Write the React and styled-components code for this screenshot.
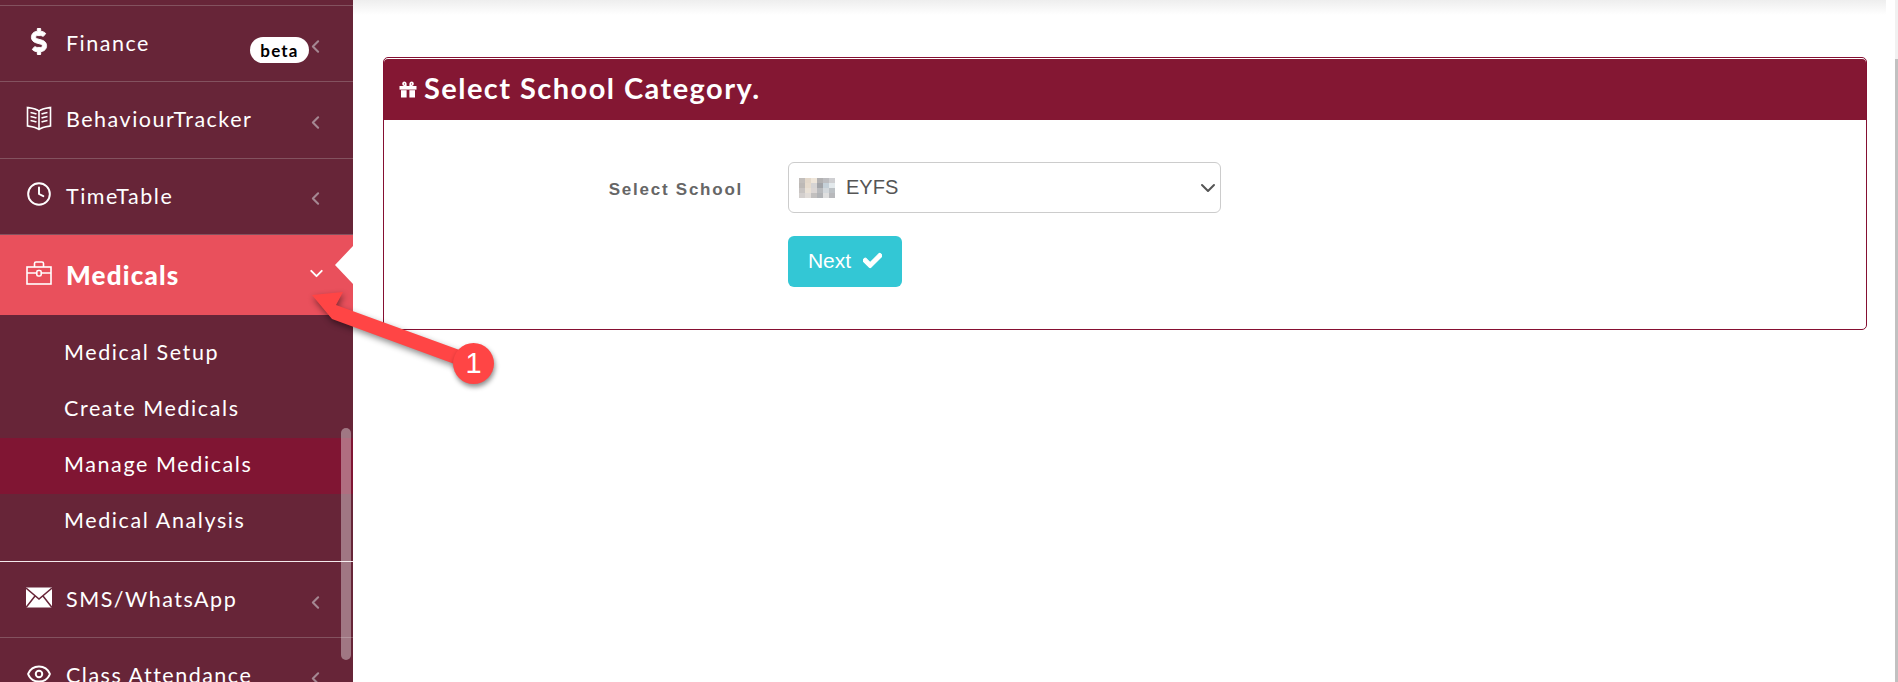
import React from 'react'
import styled, { createGlobalStyle } from 'styled-components'
import { ChevronDown, ChevronLeft, Clock, Eye } from 'lucide-react'
import { FaCheck, FaDollarSign } from 'react-icons/fa'

const SIDE_FONT = '"Lato", "Open Sans", sans-serif'

const DollarIcon = styled(FaDollarSign)`
	stroke: currentColor;
	stroke-width: 18px;
`

const CheckIcon = styled(FaCheck)`
	stroke: currentColor;
	stroke-width: 30px;
`

const BookIcon = () => (
	<svg width="26" height="26" viewBox="0 0 26 26" fill="none" stroke="currentColor" strokeWidth="1.6">
		<path d="M13 6 C10 3.5 5 3 1.5 2.5 V21 C5 21.5 10 22 13 24.5 C16 22 21 21.5 24.5 21 V2.5 C21 3 16 3.5 13 6 Z" />
		<path d="M13 6 V24" />
		<path d="M4.5 7.5 C6.5 7.8 8.5 8.2 10.5 9 M4.5 11.5 C6.5 11.8 8.5 12.2 10.5 13 M4.5 15.5 C6.5 15.8 8.5 16.2 10.5 17" />
		<path d="M21.5 7.5 C19.5 7.8 17.5 8.2 15.5 9 M21.5 11.5 C19.5 11.8 17.5 12.2 15.5 13 M21.5 15.5 C19.5 15.8 17.5 16.2 15.5 17" />
	</svg>
)

const CaseIcon = () => (
	<svg width="26" height="24" viewBox="0 0 26 24" fill="none" stroke="currentColor" strokeWidth="1.6">
		<rect x="1" y="6" width="24" height="17" />
		<path d="M8.5 6 V2.5 Q8.5 1 10 1 H16 Q17.5 1 17.5 2.5 V6" />
		<path d="M1 12 H10.5 M15.5 12 H25" />
		<rect x="10.8" y="9.5" width="4.4" height="5.5" rx="1.5" />
	</svg>
)

const MailIcon = () => (
	<svg width="26" height="21" viewBox="0 0 26 21">
		<rect x="0" y="0.5" width="26" height="20" fill="currentColor" />
		<path d="M0 1 L13 12 L26 1 M0 20.5 L9.2 8.8 M26 20.5 L16.8 8.8" fill="none" stroke="#672538" strokeWidth="1.5" />
	</svg>
)

const GiftIcon = () => (
	<svg width="18" height="17" viewBox="0 0 18 17" fill="currentColor">
		<path fillRule="evenodd" d="M5 0.5 A2.6 2.6 0 0 1 7.6 3.1 V5 H5 A2.3 2.3 0 0 1 5 0.5 Z M5.2 2.2 A0.9 0.9 0 0 0 5.2 3.5 H6 V3 A0.9 0.9 0 0 0 5.2 2.2 Z" />
		<path fillRule="evenodd" d="M13 0.5 A2.6 2.6 0 0 0 10.4 3.1 V5 H13 A2.3 2.3 0 0 0 13 0.5 Z M12.8 2.2 A0.9 0.9 0 0 1 12.8 3.5 H12 V3 A0.9 0.9 0 0 1 12.8 2.2 Z" />
		<rect x="0.5" y="5" width="17" height="3.6" />
		<rect x="2" y="9.2" width="5.6" height="7.3" />
		<rect x="10.4" y="9.2" width="5.6" height="7.3" />
	</svg>
)

const mosaicColors = [
	'#c2bebb', '#e3d8ca', '#efe6da', '#b2b1b2', '#bdbdc0', '#cfcfd2',
	'#bdb9b6', '#e6dbcd', '#d6d4d4', '#a2a4a8', '#c5d0d8', '#e3e9ec',
	'#c8c4c2', '#e9e1d6', '#dbd6d4', '#b8babd', '#d3d8dc', '#bcc1c5',
	'#d3cfcd', '#e1dcd8', '#c2c0bf', '#b1b3b6', '#dfdfdf', '#b8b9bc',
]

const menu = [
	{ label: 'Finance', icon: <DollarIcon size={27} />, beta: true },
	{ label: 'BehaviourTracker', icon: <BookIcon /> },
	{ label: 'TimeTable', icon: <Clock size={26} strokeWidth={1.8} /> },
]

const subMenu = ['Medical Setup', 'Create Medicals', 'Manage Medicals', 'Medical Analysis']

const App = () => (
	<Page>
		<GlobalStyle />
		<Sidebar>
			<TopSliver />
			{menu.map((item) => (
				<MenuRow key={item.label}>
					<MenuIcon>{item.icon}</MenuIcon>
					<MenuLabel>{item.label}</MenuLabel>
					{item.beta && <Beta>beta</Beta>}
					<Chevron><ChevronLeft size={21} strokeWidth={2.4} /></Chevron>
				</MenuRow>
			))}
			<ActiveRow>
				<MenuIcon><CaseIcon /></MenuIcon>
				<ActiveLabel>Medicals</ActiveLabel>
				<ActiveChevron><ChevronDown size={21} strokeWidth={2.2} /></ActiveChevron>
				<Caret />
			</ActiveRow>
			<SubList>
				{subMenu.map((name) => (
					<SubItem key={name} $active={name === 'Manage Medicals'}>{name}</SubItem>
				))}
			</SubList>
			<MenuRow>
				<MenuIcon><MailIcon /></MenuIcon>
				<MenuLabel>SMS/WhatsApp</MenuLabel>
				<Chevron><ChevronLeft size={21} strokeWidth={2.4} /></Chevron>
			</MenuRow>
			<MenuRow>
				<MenuIcon><Eye size={26} strokeWidth={1.8} /></MenuIcon>
				<MenuLabel>Class Attendance</MenuLabel>
				<Chevron><ChevronLeft size={21} strokeWidth={2.4} /></Chevron>
			</MenuRow>
			<SideScroll />
		</Sidebar>
		<Main>
			<TopShadow />
			<Card>
				<CardHeader>
					<GiftIcon />
					<CardTitle>Select School Category.</CardTitle>
				</CardHeader>
				<CardBody>
					<FieldLabel>Select School</FieldLabel>
					<Controls>
						<SelectBox>
							<Mosaic>
								{mosaicColors.map((color, i) => (
									<MosaicCell key={i} $color={color} />
								))}
							</Mosaic>
							<SelectText>EYFS</SelectText>
							<SelectArrow><ChevronDown size={24} strokeWidth={2} /></SelectArrow>
						</SelectBox>
						<NextButton>
							Next
							<CheckIcon size={19} />
						</NextButton>
					</Controls>
				</CardBody>
			</Card>
		</Main>
		<PageScroll />
		<Arrow width="180" height="90" viewBox="0 0 180 90">
			<path d="M2 5 L33 2 L26 15 L155 62 L150 76 L22 29 Z" />
		</Arrow>
		<StepBadge>1</StepBadge>
	</Page>
)

const GlobalStyle = createGlobalStyle`
	html, body {
		margin: 0;
		padding: 0;
		background: #ffffff;
		overflow: hidden;
	}
`

const Page = styled.div`
	position: relative;
	display: flex;
	width: 1898px;
	height: 682px;
	overflow: hidden;
	background: #ffffff;
`

const Sidebar = styled.aside`
	position: relative;
	flex: 0 0 353px;
	height: 682px;
	overflow: hidden;
	background: #672538;
	font-family: ${SIDE_FONT};
	color: #ffffff;
`

const TopSliver = styled.div`
	height: 5px;
	border-bottom: 1px solid #83525f;
`

const MenuRow = styled.div`
	position: relative;
	display: flex;
	align-items: center;
	height: 75.33px;
	padding-left: 26px;
	border-bottom: 1px solid #83525f;
`

const MenuIcon = styled.span`
	display: flex;
	justify-content: center;
	width: 26px;
	margin-right: 14px;
	margin-top: -4px;
`

const MenuLabel = styled.span`
	font-size: 21.5px;
	font-weight: 400;
	letter-spacing: 1.5px;
	margin-top: -1px;
	white-space: nowrap;
`

const Chevron = styled.span`
	position: absolute;
	right: 27px;
	top: 50%;
	display: flex;
	margin-top: -8px;
	color: #a58792;
`

const Beta = styled.span`
	position: absolute;
	left: 250px;
	top: 31px;
	display: flex;
	align-items: center;
	justify-content: center;
	width: 59px;
	height: 26px;
	border-radius: 13px;
	background: #ffffff;
	color: #000000;
	font-size: 17px;
	font-weight: 700;
	letter-spacing: 1.2px;
`

const ActiveRow = styled.div`
	position: relative;
	display: flex;
	align-items: center;
	height: 80px;
	padding-left: 26px;
	background: #e9505c;
`

const ActiveLabel = styled.span`
	font-size: 26px;
	font-weight: 900;
	letter-spacing: 1.2px;
`

const ActiveChevron = styled.span`
	position: absolute;
	left: 306px;
	top: 28px;
	display: flex;
`

const Caret = styled.span`
	position: absolute;
	right: 0;
	top: 11px;
	width: 0;
	height: 0;
	border-top: 19px solid transparent;
	border-bottom: 19px solid transparent;
	border-right: 18px solid #ffffff;
`

const SubList = styled.ul`
	margin: 0;
	padding: 11px 0;
	list-style: none;
	border-bottom: 1px solid #f4e9ec;
`

const SubItem = styled.li`
	height: 56px;
	line-height: 53px;
	padding-left: 64px;
	font-size: 21.5px;
	letter-spacing: 1.6px;
	background: ${(props) => (props.$active ? '#801533' : 'transparent')};
`

const SideScroll = styled.div`
	position: absolute;
	left: 341px;
	top: 428px;
	width: 10px;
	height: 232px;
	border-radius: 5px;
	background: rgba(255, 255, 255, 0.38);
`

const Main = styled.main`
	position: relative;
	flex: 1;
	padding: 57px 31px 0 30px;
	font-family: "Liberation Sans", Arial, sans-serif;
`

const TopShadow = styled.div`
	position: absolute;
	left: 0;
	right: 12px;
	top: 0;
	height: 15px;
	background: linear-gradient(#eeeeee, #ffffff);
`

const Card = styled.section`
	position: relative;
	height: 273px;
	box-sizing: border-box;
	border: 1px solid #850f32;
	border-radius: 5px;
	padding-top: 1px;
`

const CardHeader = styled.header`
	display: flex;
	align-items: center;
	gap: 7px;
	height: 61px;
	padding-left: 15px;
	background: #841733;
	color: #ffffff;
	border-radius: 4px 4px 0 0;
`

const CardTitle = styled.h2`
	margin: -5px 0 0;
	font-family: "Lato", sans-serif;
	font-size: 29px;
	font-weight: 700;
	letter-spacing: 1.45px;
`

const CardBody = styled.div`
	display: flex;
	padding-top: 42px;
`

const FieldLabel = styled.label`
	width: 359px;
	padding-top: 18px;
	text-align: right;
	font-size: 17px;
	font-weight: 700;
	letter-spacing: 1.75px;
	color: #666666;
`

const Controls = styled.div`
	display: flex;
	flex-direction: column;
	align-items: flex-start;
	gap: 23px;
	margin-left: 45px;
`

const SelectBox = styled.div`
	display: flex;
	align-items: center;
	box-sizing: border-box;
	width: 433px;
	height: 51px;
	padding: 0 0 0 10px;
	border: 1px solid #cccccc;
	border-radius: 6px;
	color: #555555;
	font-size: 20px;
`

const Mosaic = styled.span`
	display: grid;
	grid-template-columns: repeat(6, 6px);
	grid-auto-rows: 5px;
	margin-right: 11px;
`

const MosaicCell = styled.span`
	background: ${(props) => props.$color};
`

const SelectText = styled.span`
	flex: 1;
`

const SelectArrow = styled.span`
	display: flex;
	color: #555555;
`

const NextButton = styled.button`
	display: flex;
	align-items: center;
	justify-content: center;
	gap: 12px;
	width: 114px;
	height: 51px;
	padding: 0 0 2px;
	border: 0;
	border-radius: 6px;
	background: #33c7d5;
	color: #ffffff;
	font-family: inherit;
	font-size: 21px;
`

const PageScroll = styled.div`
	position: absolute;
	right: 0;
	top: 0;
	width: 3px;
	height: 682px;
	background: linear-gradient(#f1f1f1 59px, #c1c1c1 59px);
`

const Arrow = styled.svg`
	position: absolute;
	left: 310px;
	top: 290px;
	overflow: visible;
	fill: #ff4545;
	filter: drop-shadow(1px 3px 3px rgba(0, 0, 0, 0.45));
`

const StepBadge = styled.div`
	position: absolute;
	left: 453px;
	top: 343px;
	display: flex;
	align-items: center;
	justify-content: center;
	width: 41px;
	height: 41px;
	border-radius: 50%;
	background: #ff4545;
	color: #ffffff;
	font-family: "Liberation Sans", Arial, sans-serif;
	font-size: 29px;
	box-shadow: 1px 3px 5px rgba(0, 0, 0, 0.45);
`

export default App
